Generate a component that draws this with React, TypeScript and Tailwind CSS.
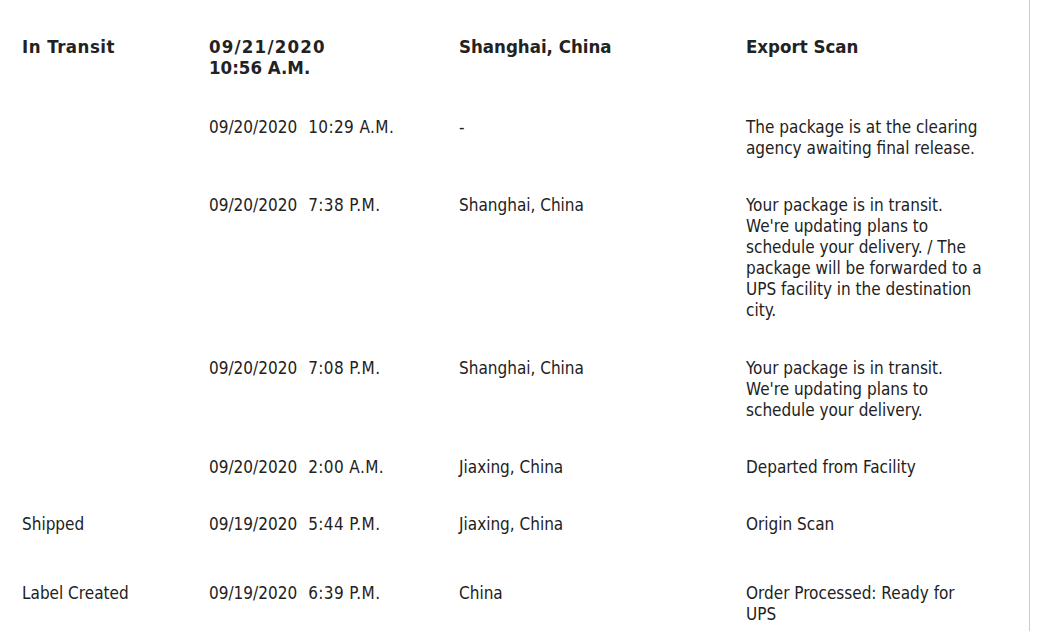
import React from "react";

type Row = {
  status?: string;
  date: string;
  time: string;
  location: string;
  desc: string[];
  bold?: boolean;
  extra?: string;
};

const rows: Row[] = [
  {
    status: "In Transit",
    date: "09/21/2020",
    time: "10:56 A.M.",
    location: "Shanghai, China",
    desc: ["Export Scan"],
    bold: true,
    extra: "pb-[21px]",
  },
  {
    date: "09/20/2020",
    time: "10:29 A.M.",
    location: "-",
    desc: ["The package is at the clearing", "agency awaiting final release."],
  },
  {
    date: "09/20/2020",
    time: "7:38 P.M.",
    location: "Shanghai, China",
    desc: [
      "Your package is in transit.",
      "We're updating plans to",
      "schedule your delivery. / The",
      "package will be forwarded to a",
      "UPS facility in the destination",
      "city.",
    ],
    extra: "pb-[19px]",
  },
  {
    date: "09/20/2020",
    time: "7:08 P.M.",
    location: "Shanghai, China",
    desc: [
      "Your package is in transit.",
      "We're updating plans to",
      "schedule your delivery.",
    ],
  },
  {
    date: "09/20/2020",
    time: "2:00 A.M.",
    location: "Jiaxing, China",
    desc: ["Departed from Facility"],
  },
  {
    status: "Shipped",
    date: "09/19/2020",
    time: "5:44 P.M.",
    location: "Jiaxing, China",
    desc: ["Origin Scan"],
    extra: "pb-[30px]",
  },
  {
    status: "Label Created",
    date: "09/19/2020",
    time: "6:39 P.M.",
    location: "China",
    desc: ["Order Processed: Ready for", "UPS"],
  },
];

export default function App() {
  return (
    <div
      className="w-[1041px] h-[631px] overflow-hidden bg-white text-[#222222]"
      style={{ fontFamily: '"DejaVu Sans Condensed", "Liberation Sans", sans-serif' }}
    >
      <div className="w-[1030px] h-[631px] border-r border-[#cccccc] pt-[18px]">
        {rows.map((r, i) => (
          <div
            key={i}
            className={`grid grid-cols-[187px_250px_287px_260px] pl-[22px] pt-[18px] pb-[18px] leading-[21px] ${
              r.bold ? "font-bold text-[18.5px]" : "text-[17px]"
            } ${r.extra ?? ""}`}
          >
            <div className={r.bold ? "tracking-[0.5px]" : ""}>{r.status ?? ""}</div>
            <div>
              {r.bold ? (
                <>
                  <div className="tracking-[1.2px]">{r.date}</div>
                  <div>{r.time}</div>
                </>
              ) : (
                <span>
                  {r.date}
                  <span className="ml-[11px] tracking-[0.4px]">{r.time}</span>
                </span>
              )}
            </div>
            <div>{r.location}</div>
            <div>
              {r.desc.map((d, j) => (
                <div key={j} className="whitespace-nowrap">
                  {d}
                </div>
              ))}
            </div>
          </div>
        ))}
      </div>
    </div>
  );
}
